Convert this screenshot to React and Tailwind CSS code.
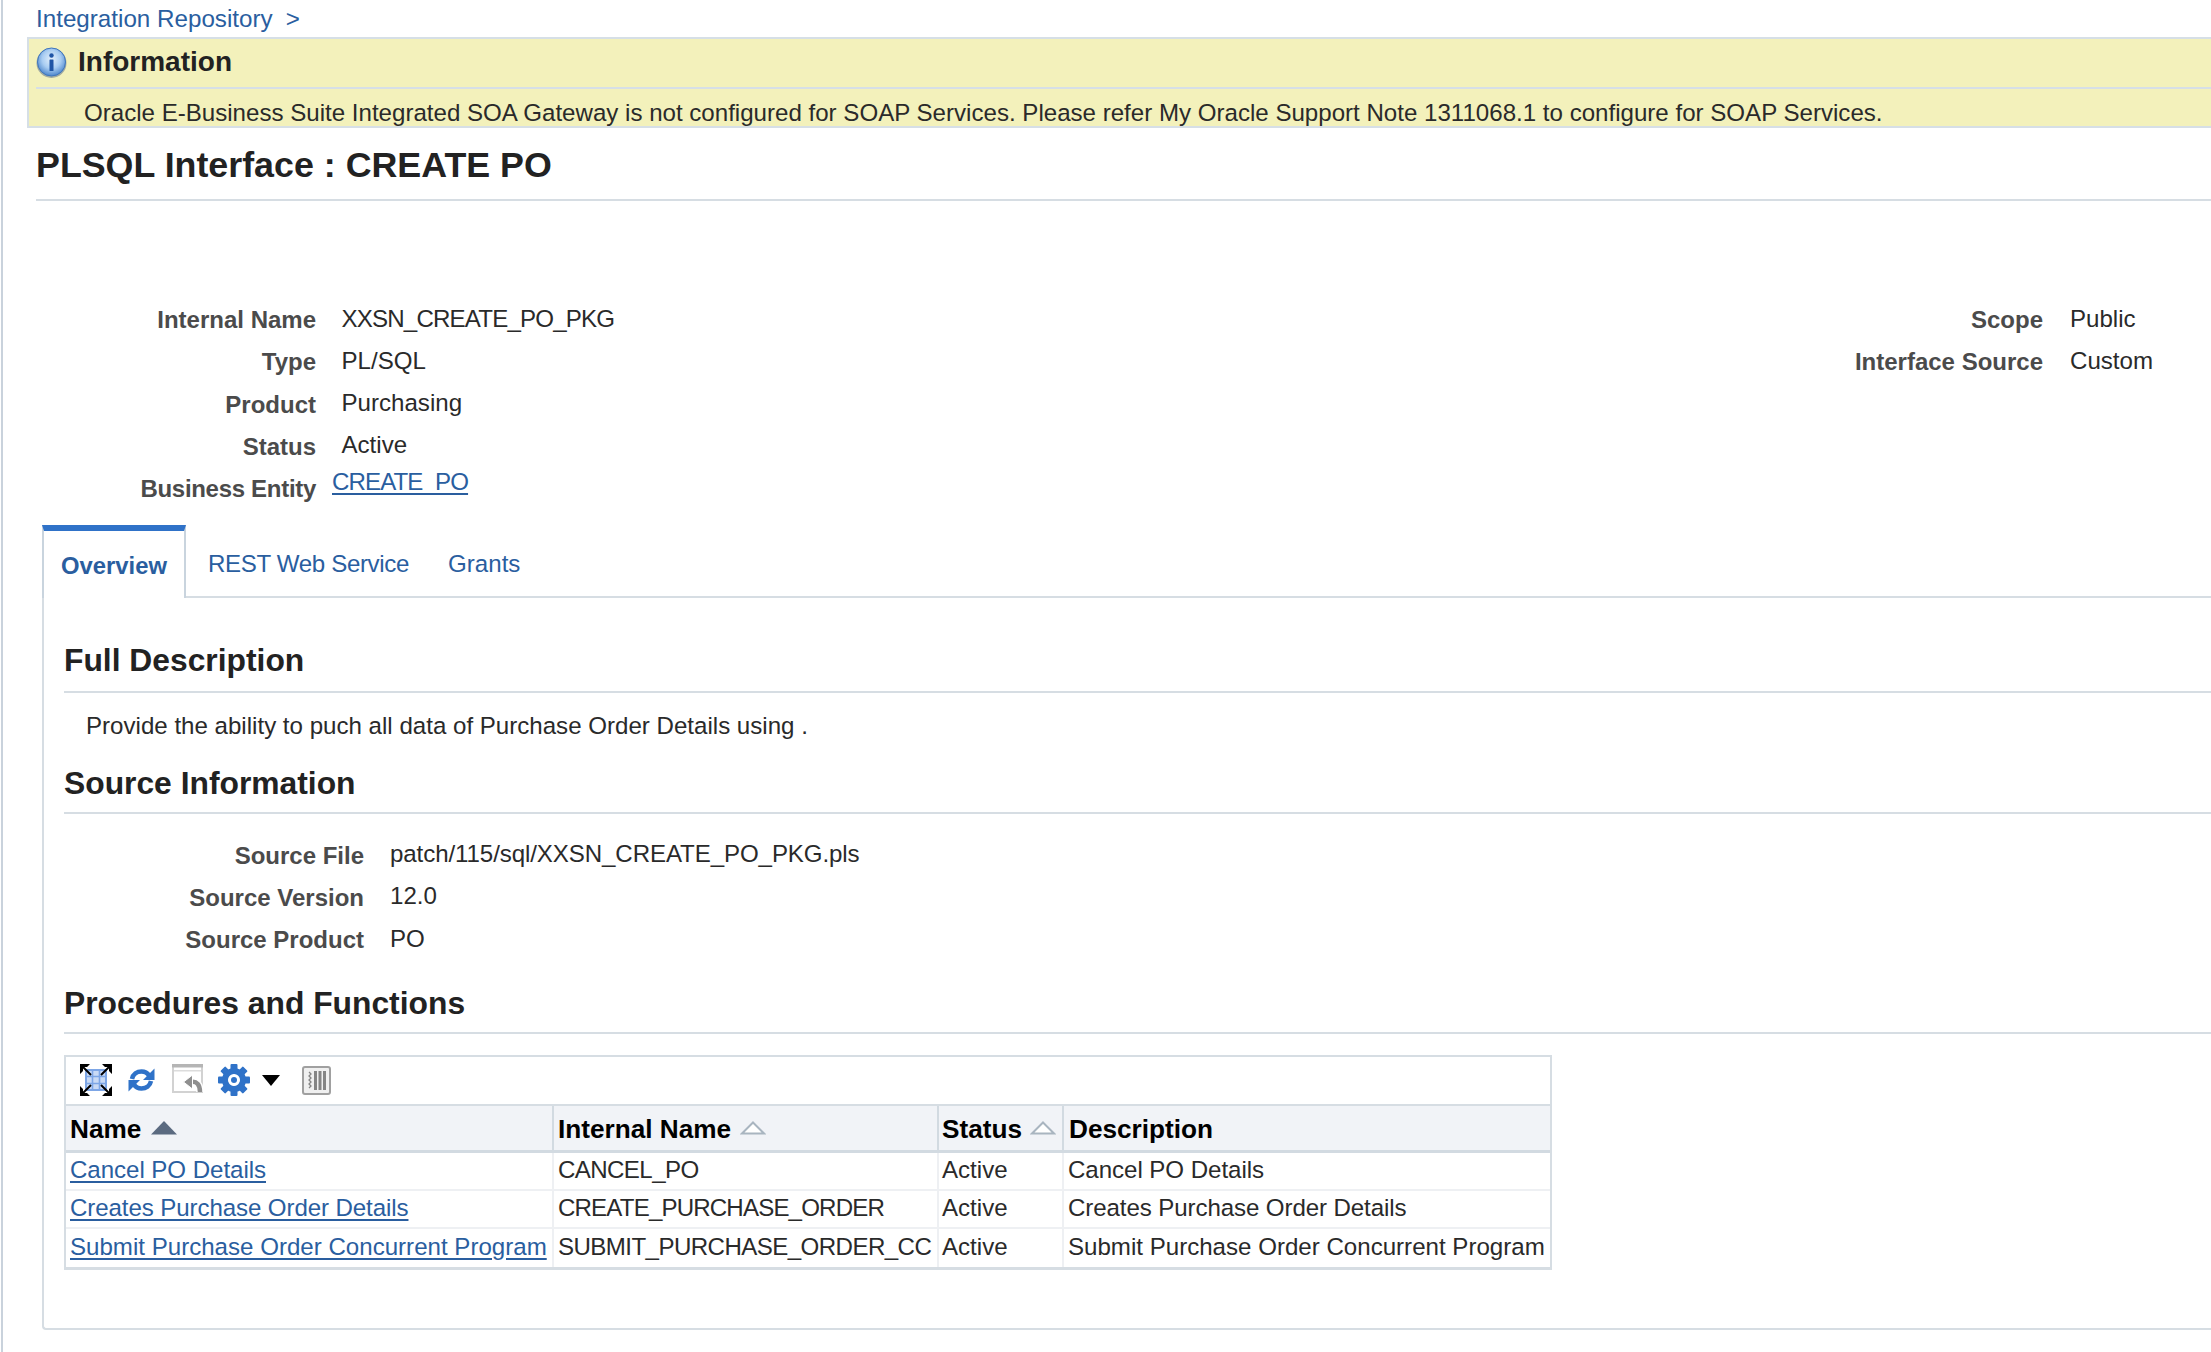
import React from "react";

const Info = () => (
  <svg width="31" height="31" viewBox="0 0 31 31" className="shrink-0">
    <defs>
      <radialGradient id="ib" cx="50%" cy="40%" r="60%">
        <stop offset="0%" stopColor="#e4f0fc" />
        <stop offset="55%" stopColor="#a9cdf2" />
        <stop offset="100%" stopColor="#4d86cc" />
      </radialGradient>
    </defs>
    <circle cx="15.5" cy="16" r="15" fill="#5b6f8c" opacity="0.55" />
    <circle cx="15.5" cy="15" r="14" fill="url(#ib)" stroke="#3f76bd" strokeWidth="1" />
    <circle cx="15.5" cy="8.5" r="2.2" fill="#1f55a6" />
    <rect x="13.5" y="12.5" width="4" height="11.5" rx="0.5" fill="#1f55a6" />
  </svg>
);

const ExpandIcon = () => (
  <svg width="32" height="32" viewBox="0 0 32 32">
    <rect x="6" y="6" width="20" height="20" fill="#c9daf5" stroke="#7da6e6" strokeWidth="2" />
    <path d="M6 12.5H26M6 19.5H26M12.5 6V26M19.5 6V26" stroke="#7da6e6" strokeWidth="1.6" fill="none" />
    <path d="M3 3L11 11M29 3L21 11M3 29L11 21M29 29L21 21" fill="none" stroke="#000" strokeWidth="2" />
    <g fill="#000">
      <path d="M0 0H10L7 3H3V7L0 10Z" />
      <path d="M32 0H22L25 3H29V7L32 10Z" />
      <path d="M0 32H10L7 29H3V25L0 22Z" />
      <path d="M32 32H22L25 29H29V25L32 22Z" />
    </g>
  </svg>
);

const RefreshIcon = () => (
  <svg width="27" height="24" viewBox="0 0 27 24">
    <path d="M4 11C5 6 9 3.500 13.500 3.500C17 3.500 19.500 5 21 7.500" fill="none" stroke="#2f72c8" strokeWidth="4.500" />
    <path d="M26.500 0.500V12H15Z" fill="#2f72c8" />
    <path d="M23 13C22 18 18 20.500 13.500 20.500C10 20.500 7.500 19 6 16.500" fill="none" stroke="#2f72c8" strokeWidth="4.500" />
    <path d="M0.500 23.500V12H12Z" fill="#2f72c8" />
  </svg>
);

const UndoWindowIcon = () => (
  <svg width="33" height="32" viewBox="0 0 33 32">
    <rect x="1" y="1" width="29" height="27" fill="#fff" stroke="#d2d2d2" strokeWidth="2" />
    <rect x="0" y="0" width="31" height="3.500" fill="#b5b5b5" />
    <rect x="2" y="6" width="27" height="1.500" fill="#dcdcdc" />
    <path d="M19 18c6-1 9 3 9 10" fill="none" stroke="#fff" strokeWidth="7.500" />
    <path d="M19 18c6-1 9 3 9 10" fill="none" stroke="#8f8f8f" strokeWidth="4.500" />
    <path d="M11.500 18l9-7V25Z" fill="#8f8f8f" stroke="#fff" strokeWidth="1" />
  </svg>
);

const GearIcon = () => {
  const angles = [0, 45, 90, 135, 180, 225, 270, 315];
  return (
    <svg width="32" height="32" viewBox="0 0 32 32">
      <g fill="#2f72c8">
        {angles.map((a) => (
          <rect key={a} x="12.500" y="0" width="7" height="8" rx="1" transform={`rotate(${a} 16 16)`} />
        ))}
      </g>
      <circle cx="16" cy="16" r="9" fill="none" stroke="#2f72c8" strokeWidth="6" />
      <circle cx="16" cy="16" r="5.500" fill="#fff" />
      <circle cx="16" cy="16" r="3" fill="#2f72c8" />
    </svg>
  );
};

const ColumnsIcon = () => (
  <svg width="29" height="29" viewBox="0 0 29 29">
    <rect x="1" y="1" width="27" height="27" rx="2" fill="#f0f0f0" stroke="#a0a0a0" strokeWidth="2" />
    <path d="M7 6l2 2-2 2 2 2-2 2 2 2-2 2 2 2-2 2" fill="none" stroke="#858585" strokeWidth="1.300" />
    <rect x="12" y="5" width="3" height="19" fill="#858585" />
    <rect x="16.500" y="5" width="3" height="19" fill="#858585" />
    <rect x="21" y="5" width="3" height="19" fill="#858585" />
  </svg>
);

const SortUp = ({ filled }) => (
  <svg width="26" height="14" viewBox="0 0 26 14" className="shrink-0">
    {filled ? (
      <path d="M13 0L26 13.500H0Z" fill="#5b6a80" />
    ) : (
      <path d="M13 1.500L24 12.500H2Z" fill="#fff" stroke="#a9b5c0" strokeWidth="2" />
    )}
  </svg>
);

const Row = ({ label, w, children, lead = "gap-[25.500px]", labelCls = "" }) => (
  <div className={`flex h-[42.3px] items-center ${lead}`}>
    <div className={`${w} ${labelCls} pt-[3px] text-right text-[24px] font-bold leading-none text-[#4b4b4b]`}>{label}</div>
    {children}
  </div>
);

const Val = ({ children, cls = "" }) => <div className={`text-[24.100px] leading-none text-[#2a2a2a] ${cls}`}>{children}</div>;

const Section = ({ title, h, children, gap = "mt-[8px]" }) => (
  <div>
    <div className={`flex ${h} items-end text-[31.800px] font-bold leading-none text-[#222]`}>{title}</div>
    <div className={`${gap} h-[2px] bg-[#d6dde3]`} />
    {children}
  </div>
);

const A = ({ children }) => <a className="text-[#2a5e9f] underline underline-offset-[3px]">{children}</a>;

const gridCols = "grid grid-cols-[488px_385px_125px_1fr]";

const rows = [
  { a: "Cancel PO Details", b: "CANCEL_PO", bc: "tracking-[-0.6px]", c: "Active", d: "Cancel PO Details", tc: "tracking-[-0.05px]" },
  { a: "Creates Purchase Order Details", b: "CREATE_PURCHASE_ORDER", bc: "tracking-[-0.84px]", c: "Active", d: "Creates Purchase Order Details", tc: "tracking-[-0.1px]" },
  { a: "Submit Purchase Order Concurrent Program", b: "SUBMIT_PURCHASE_ORDER_CC", bc: "tracking-[-0.57px]", c: "Active", d: "Submit Purchase Order Concurrent Program", tc: "" },
];

export default function App() {
  return (
    <div className="h-[1352px] w-full overflow-hidden bg-white font-['Liberation_Sans',Arial,sans-serif] text-[#2a2a2a]">
      <div className="ml-px h-full border-l-2 border-[#c9d2dc]">
        <div className="flex h-[37px] items-center gap-[13px] pl-[33px] pt-[2px] text-[24.200px] leading-none text-[#2a5e9f]">
          <span>Integration Repository</span>
          <span>&gt;</span>
        </div>
        <div className="ml-[24px] h-[91px] border-2 border-r-0 border-[#d6dfe6] bg-[#f3f1bb] pl-[7px]">
          <div className="flex h-[50px] items-center gap-[11px] border-b-2 border-[#d6dfe6] pb-[2px]">
            <Info />
            <span className="text-[28px] font-bold leading-none text-[#222]">Information</span>
          </div>
          <div className="flex h-[37px] items-center pl-[48px] pt-[11px] text-[24.100px] leading-none text-[#2a2a2a]">
            Oracle E-Business Suite Integrated SOA Gateway is not configured for SOAP Services. Please refer My Oracle Support Note 1311068.1 to configure for SOAP Services.
          </div>
        </div>
        <div className="ml-[33px]">
          <div className="flex h-[71px] items-center pt-[4px] text-[35.800px] font-bold leading-none text-[#222]">PLSQL Interface : CREATE PO</div>
          <div className="h-[2px] bg-[#d6dde3]" />
        </div>
        <div className="ml-[39px]">
          <div className="flex justify-between pr-[56px] pt-[96.500px]">
            <div className="flex flex-col">
              <Row label="Internal Name" w="w-[274px]"><Val cls="tracking-[-0.82px]">XXSN_CREATE_PO_PKG</Val></Row>
              <Row label="Type" w="w-[274px]"><Val>PL/SQL</Val></Row>
              <Row label="Product" w="w-[274px]"><Val>Purchasing</Val></Row>
              <Row label="Status" w="w-[274px]"><Val>Active</Val></Row>
              <Row label="Business Entity" w="w-[274px]" lead="gap-[16px]" labelCls="tracking-[-0.3px]">
                <div className="-mt-[12px] text-[24.100px] leading-none tracking-[-0.9px]"><A>CREATE_PO</A></div>
              </Row>
            </div>
            <div className="flex flex-col">
              <div className="flex h-[42.3px] items-center gap-[27px]">
                <div className="w-[190px] pt-[3px] text-right text-[24px] font-bold leading-none text-[#4b4b4b]">Scope</div>
                <div className="w-[85px]"><Val>Public</Val></div>
              </div>
              <div className="flex h-[42.3px] items-center gap-[27px]">
                <div className="w-[190px] pt-[3px] text-right text-[24px] font-bold leading-none text-[#4b4b4b]">Interface Source</div>
                <div className="w-[85px]"><Val>Custom</Val></div>
              </div>
            </div>
          </div>

          <div className="mt-[16px] flex h-[73px]">
            <div className="flex w-[144px] items-center justify-center border-x-2 border-t-[6px] border-b-0 border-x-[#c9d4de] border-t-[#2f72c8] pt-[3px] text-[23.800px] font-bold leading-none text-[#2a5e9f]">Overview</div>
            <div className="flex flex-1 items-center gap-[39px] border-b-2 border-[#d6dde3] pl-[22px] pt-[8px] text-[24.100px] leading-none text-[#2a5e9f]">
              <span className="tracking-[-0.35px]">REST Web Service</span>
              <span>Grants</span>
            </div>
          </div>

          <div className="h-[732px] rounded-bl-[4px] border-b-2 border-l-2 border-[#d6dde3] pl-[20px] pt-[42px]">
            <Section title="Full Description" h="h-[37px]" gap="mt-[14px]">
              <div className="flex h-[70px] items-center pb-[3px] pl-[22px] text-[24.100px] leading-none text-[#2a2a2a]">
                Provide the ability to puch all data of Purchase Order Details using .
              </div>
            </Section>
            <Section title="Source Information" h="h-[37px]" gap="mt-[12px]">
              <div className="mt-[19px]">
                <Row label="Source File" w="w-[300px]" lead="gap-[26px]"><Val cls="tracking-[-0.1px]">patch/115/sql/XXSN_CREATE_PO_PKG.pls</Val></Row>
                <Row label="Source Version" w="w-[300px]" lead="gap-[26px]"><Val>12.0</Val></Row>
                <Row label="Source Product" w="w-[300px]" lead="gap-[26px]"><Val>PO</Val></Row>
              </div>
            </Section>
            <div className="mt-[20px]">
              <Section title="Procedures and Functions" h="h-[40px]" gap="mt-[12px]">
                <div className="mt-[21px] w-[1488px] border-2 border-b-[3px] border-[#d6dde3]">
                  <div className="flex h-[49px] items-center border-b-2 border-[#d6dde3] pl-[14px]">
                    <ExpandIcon />
                    <span className="ml-[16px]"><RefreshIcon /></span>
                    <span className="ml-[17px]"><UndoWindowIcon /></span>
                    <span className="ml-[13px]"><GearIcon /></span>
                    <span className="ml-[12px] h-0 w-0 border-x-[9px] border-t-[11px] border-x-transparent border-t-black" />
                    <span className="ml-[22px]"><ColumnsIcon /></span>
                  </div>
                  <div className={`${gridCols} h-[47px] border-b-[3px] border-[#d2dae1] bg-[#f1f3f7] text-[26.200px] font-bold leading-none text-black`}>
                    <div className="flex items-center gap-[10px] border-r-2 border-[#d2dae1] pl-[4px]"><span className="pt-[2px]">Name</span><SortUp filled /></div>
                    <div className="flex items-center gap-[9px] border-r-2 border-[#d2dae1] pl-[4px]"><span className="pt-[2px]">Internal Name</span><SortUp /></div>
                    <div className="flex items-center gap-[8px] border-r-2 border-[#d2dae1] pl-[3px]"><span className="pt-[2px]">Status</span><SortUp /></div>
                    <div className="flex items-center pl-[5px]"><span className="pt-[3px]">Description</span></div>
                  </div>
                  {rows.map((r, i) => (
                    <div key={r.a} className={`${gridCols} h-[38px] text-[24.100px] leading-none text-[#2a2a2a] ${i < 2 ? "border-b-2 border-[#eef0f3]" : ""}`}>
                      <div className={`flex items-center whitespace-nowrap border-r-2 border-[#eef0f3] pb-[1px] pl-[4px] ${r.tc}`}><A>{r.a}</A></div>
                      <div className={`flex items-center whitespace-nowrap border-r-2 border-[#eef0f3] pb-[1px] pl-[4px] ${r.bc}`}>{r.b}</div>
                      <div className="flex items-center whitespace-nowrap border-r-2 border-[#eef0f3] pb-[1px] pl-[3px]">{r.c}</div>
                      <div className={`flex items-center whitespace-nowrap pb-[1px] pl-[4px] ${r.tc}`}>{r.d}</div>
                    </div>
                  ))}
                </div>
              </Section>
            </div>
          </div>
        </div>
      </div>
    </div>
  );
}
